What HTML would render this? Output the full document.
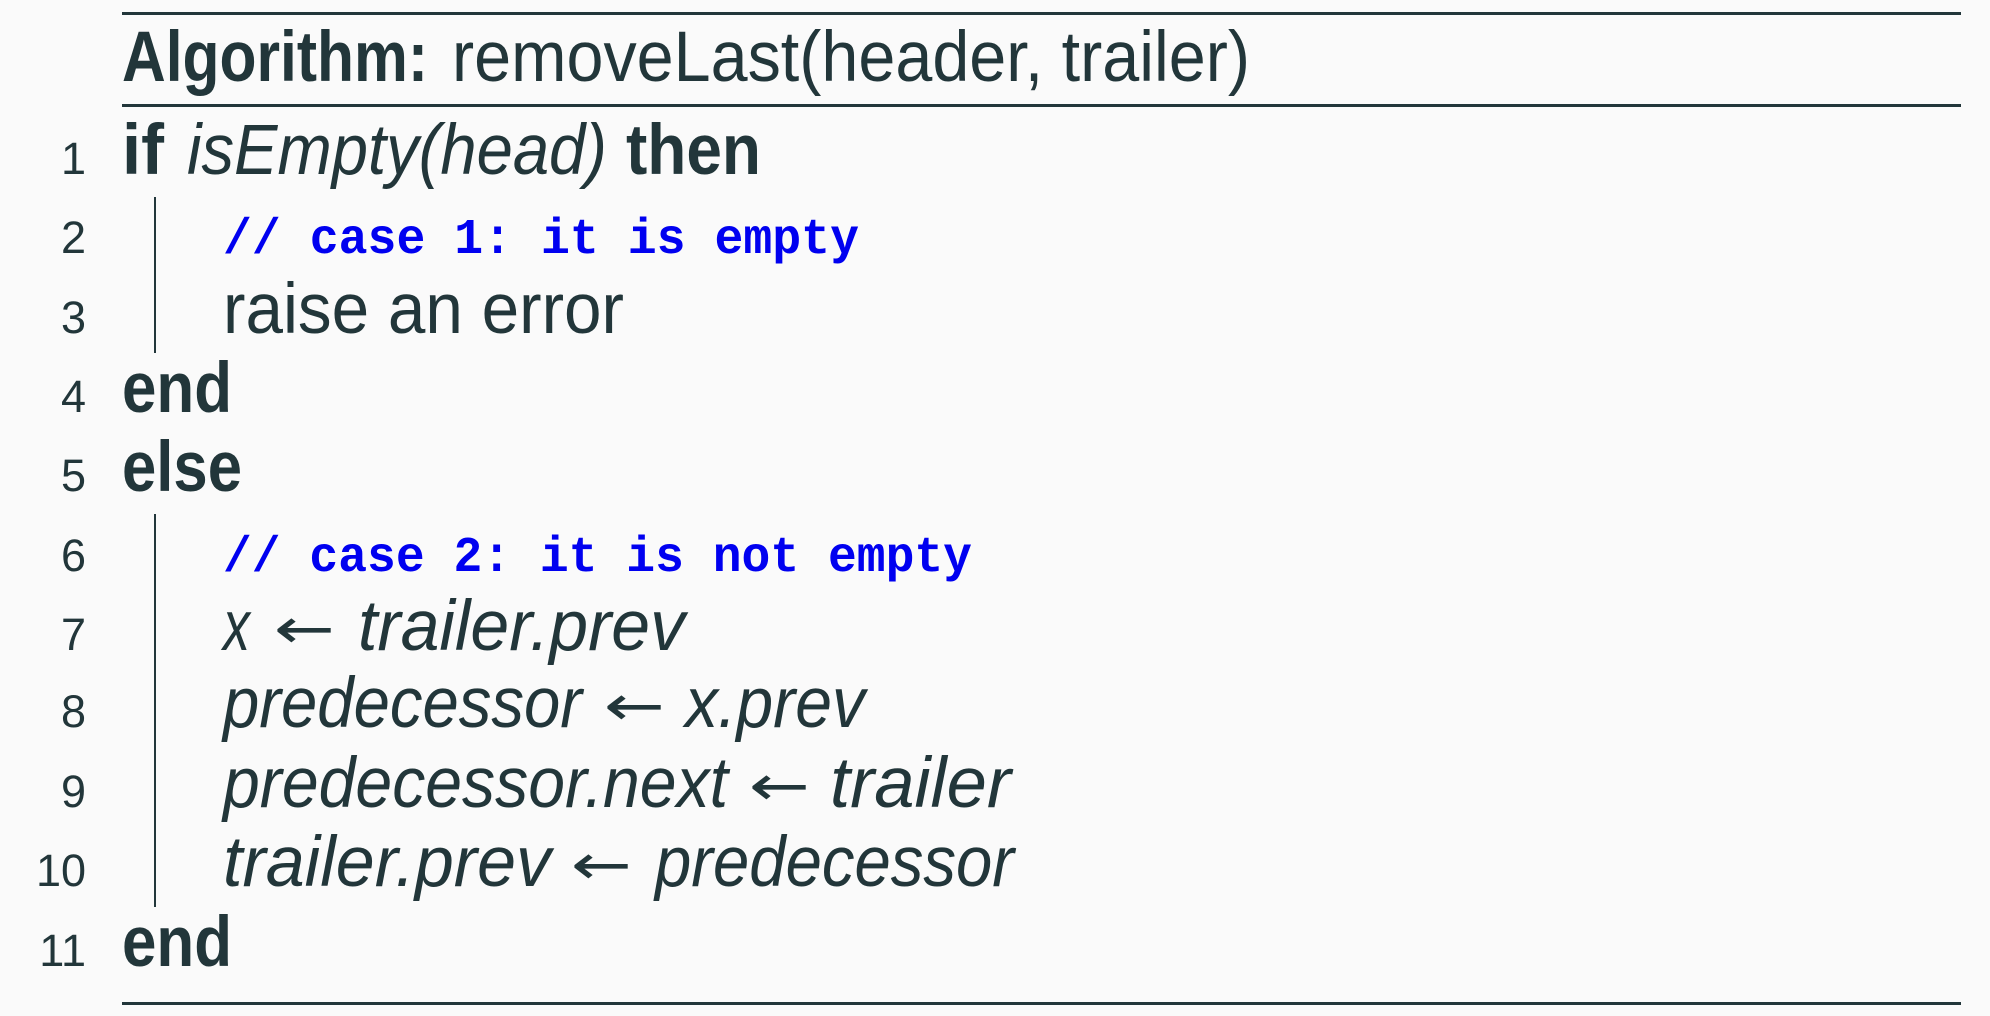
<!DOCTYPE html>
<html><head><meta charset="utf-8"><style>
html,body{margin:0;padding:0;background:#fafafa;}
svg{display:block}
text{fill:#22363a;font-family:"Liberation Sans",sans-serif;}
.b{font-size:71px;}
.bd{font-weight:bold;}
.it{font-style:italic;}
.n{font-size:45px;text-anchor:end;}
.c{font-family:"Liberation Mono",monospace;font-size:50px;fill:#0000f0;font-weight:bold;}
.ar{font-family:"DejaVu Sans","Liberation Sans",sans-serif;font-size:56px;}
</style></head><body>
<svg width="1990" height="1016" viewBox="0 0 1990 1016" xmlns="http://www.w3.org/2000/svg">
<rect width="1990" height="1016" fill="#fafafa"/>
<g stroke="#22363a" stroke-width="3">
<line x1="122" y1="13.5" x2="1961" y2="13.5"/>
<line x1="122" y1="105.5" x2="1961" y2="105.5"/>
<line x1="122" y1="1003.5" x2="1961" y2="1003.5"/>
</g>
<g stroke="#22363a" stroke-width="2">
<line x1="155" y1="197" x2="155" y2="353"/>
<line x1="155" y1="514" x2="155" y2="907"/>
</g>
<text class="b bd" x="122" y="81" textLength="306" lengthAdjust="spacingAndGlyphs">Algorithm:</text>
<text class="b" x="452" y="81" textLength="798" lengthAdjust="spacingAndGlyphs">removeLast(header, trailer)</text>

<text class="n" x="86" y="174">1</text>
<text class="n" x="86" y="253">2</text>
<text class="n" x="86" y="333">3</text>
<text class="n" x="86" y="412">4</text>
<text class="n" x="86" y="491">5</text>
<text class="n" x="86" y="571">6</text>
<text class="n" x="86" y="650">7</text>
<text class="n" x="86" y="727">8</text>
<text class="n" x="86" y="807">9</text>
<text class="n" x="86" y="886">10</text>
<text class="n" x="86" y="966">11</text>

<text class="b bd" x="122" y="174" textLength="42" lengthAdjust="spacingAndGlyphs">if</text>
<text class="b it" x="187" y="174" textLength="420" lengthAdjust="spacingAndGlyphs">isEmpty(head)</text>
<text class="b bd" x="626" y="174" textLength="135" lengthAdjust="spacingAndGlyphs">then</text>

<text class="c" x="223" y="253" textLength="636" lengthAdjust="spacingAndGlyphs">// case 1: it is empty</text>
<text class="b" x="223" y="333" textLength="401" lengthAdjust="spacingAndGlyphs">raise an error</text>
<text class="b bd" x="122" y="412" textLength="110" lengthAdjust="spacingAndGlyphs">end</text>
<text class="b bd" x="122" y="491" textLength="120" lengthAdjust="spacingAndGlyphs">else</text>
<text class="c" x="223" y="571" textLength="749" lengthAdjust="spacingAndGlyphs">// case 2: it is not empty</text>

<text class="b it" x="223" y="650" textLength="27" lengthAdjust="spacingAndGlyphs">x</text>
<text class="ar" x="274" y="648" textLength="61" lengthAdjust="spacingAndGlyphs">←</text>
<text class="b it" x="358" y="650" textLength="327" lengthAdjust="spacingAndGlyphs">trailer.prev</text>

<text class="b it" x="223" y="727" textLength="359" lengthAdjust="spacingAndGlyphs">predecessor</text>
<text class="ar" x="604" y="725" textLength="61" lengthAdjust="spacingAndGlyphs">←</text>
<text class="b it" x="685" y="727" textLength="180" lengthAdjust="spacingAndGlyphs">x.prev</text>

<text class="b it" x="223" y="807" textLength="505" lengthAdjust="spacingAndGlyphs">predecessor.next</text>
<text class="ar" x="749" y="805" textLength="61" lengthAdjust="spacingAndGlyphs">←</text>
<text class="b it" x="830" y="807" textLength="181" lengthAdjust="spacingAndGlyphs">trailer</text>

<text class="b it" x="223" y="886" textLength="328" lengthAdjust="spacingAndGlyphs">trailer.prev</text>
<text class="ar" x="571" y="884" textLength="61" lengthAdjust="spacingAndGlyphs">←</text>
<text class="b it" x="655" y="886" textLength="359" lengthAdjust="spacingAndGlyphs">predecessor</text>

<text class="b bd" x="122" y="966" textLength="110" lengthAdjust="spacingAndGlyphs">end</text>
</svg>
</body></html>
